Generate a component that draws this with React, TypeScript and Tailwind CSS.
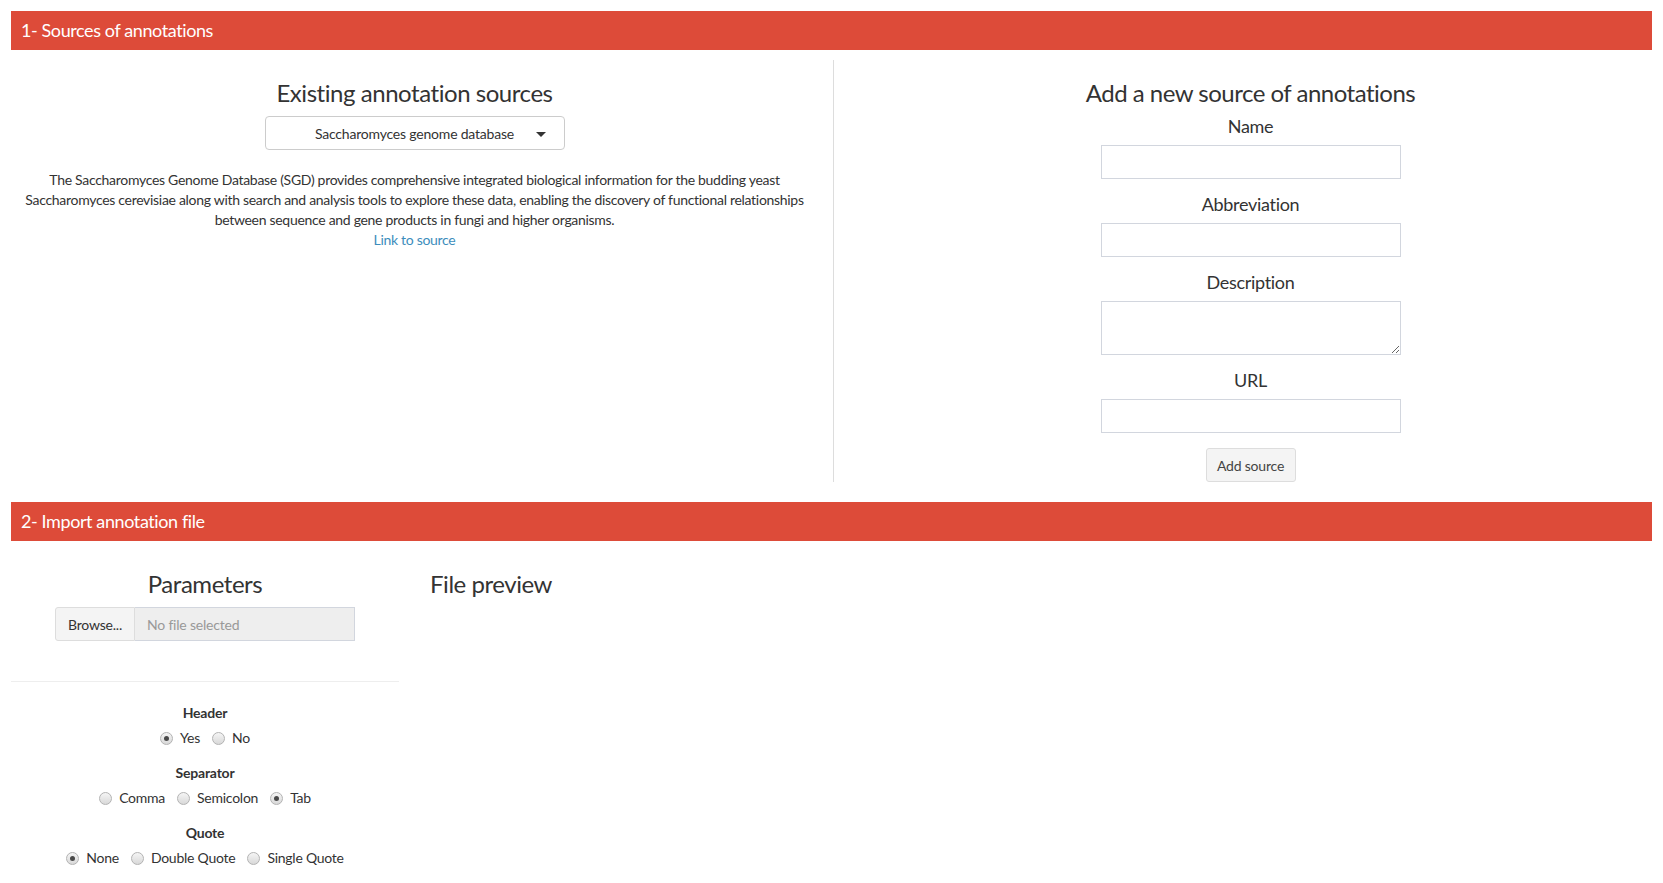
type RadioOption = {
  label: string;
  checked?: boolean;
};

type RadioGroupProps = {
  title: string;
  options: RadioOption[];
};

const sourceFields = ["Name", "Abbreviation"];

function SectionBar({ title }: { title: string }) {
  return (
    <div className="flex h-[39px] items-center bg-[#dd4b39] pl-[10px] text-[18px] tracking-[-0.4px] text-white">
      {title}
    </div>
  );
}

function Radio({ label, checked }: RadioOption) {
  return (
    <span className="inline-flex items-center gap-[7px]">
      <span className="flex h-[13px] w-[13px] items-center justify-center rounded-full border border-[#b3b3b3] bg-linear-to-b from-[#f5f5f5] to-[#d9d9d9]">
        {checked && <span className="h-[5px] w-[5px] rounded-full bg-[#4a4a4a]" />}
      </span>
      {label}
    </span>
  );
}

function RadioGroup({ title, options }: RadioGroupProps) {
  return (
    <div className="mb-[15px] flex flex-col items-center">
      <div className="text-[14px] leading-[20px] font-bold tracking-[-0.2px]">{title}</div>
      <div className="mt-[5px] flex items-center gap-[12px] text-[14px] leading-[20px] tracking-[-0.25px]">
        {options.map((option) => (
          <Radio key={option.label} label={option.label} checked={option.checked} />
        ))}
      </div>
    </div>
  );
}

function FieldLabel({ children }: { children: string }) {
  return <div className="mb-[9px] text-[18px] leading-[20px] tracking-[-0.3px]">{children}</div>;
}

export default function App() {
  return (
    <div className="min-h-screen bg-white px-[11px] pt-[11px] font-['Lato',sans-serif] text-[#333]">
      <SectionBar title="1- Sources of annotations" />

      <div className="mt-[10px] grid grid-cols-[822px_1fr]">
        {/* existing sources */}
        <div className="flex flex-col items-center pr-[15px]">
          <h3 className="mt-[20px] mb-[10px] text-[24px] leading-[26px] tracking-[-0.45px]">Existing annotation sources</h3>
          <div className="relative flex h-[34px] w-[300px] items-center justify-center rounded-[4px] border border-[#ccc] bg-white text-[14px] tracking-[-0.2px]">
            Saccharomyces genome database
            <span className="absolute top-[15px] right-[18px] h-0 w-0 border-x-[5px] border-t-[5px] border-x-transparent border-t-[#333]" />
          </div>
          <p className="mt-[20px] text-center text-[14px] leading-[20px] tracking-[-0.3px] whitespace-nowrap">
            The Saccharomyces Genome Database (SGD) provides comprehensive integrated biological information for the budding yeast
            <br />
            Saccharomyces cerevisiae along with search and analysis tools to explore these data, enabling the discovery of functional relationships
            <br />
            between sequence and gene products in fungi and higher organisms.
            <br />
            <a href="#" className="text-[#3c8dbc]">
              Link to source
            </a>
          </p>
        </div>

        {/* new source form */}
        <div className="flex flex-col items-center border-l border-[#ddd] pl-[15px]">
          <h3 className="mt-[20px] mb-[10px] text-[24px] leading-[26px] tracking-[-0.5px]">Add a new source of annotations</h3>
          {sourceFields.map((field) => (
            <div key={field} className="mb-[15px] flex flex-col items-center">
              <FieldLabel>{field}</FieldLabel>
              <input className="h-[34px] w-[300px] border border-[#d2d6de] px-[12px] text-[14px] outline-none" />
            </div>
          ))}
          <div className="mb-[15px] flex flex-col items-center">
            <FieldLabel>Description</FieldLabel>
            <textarea className="block h-[54px] w-[300px] border border-[#d2d6de] px-[12px] py-[6px] text-[14px] outline-none" />
          </div>
          <div className="flex flex-col items-center">
            <FieldLabel>URL</FieldLabel>
            <input className="h-[34px] w-[300px] border border-[#d2d6de] px-[12px] text-[14px] outline-none" />
          </div>
          <button className="mt-[15px] h-[34px] w-[90px] rounded-[3px] border border-[#ddd] bg-[#f4f4f4] text-[14px] tracking-[-0.2px] text-[#444]">
            Add source
          </button>
        </div>
      </div>

      <div className="mt-[20px]">
        <SectionBar title="2- Import annotation file" />
      </div>

      <div className="grid grid-cols-[388px_1fr]">
        {/* parameters */}
        <div className="flex flex-col items-center">
          <h3 className="mt-[30px] mb-[10px] text-[24px] leading-[26px] tracking-[-0.45px]">Parameters</h3>
          <div className="flex h-[34px] w-[300px] text-[14px] tracking-[-0.2px]">
            <span className="flex w-[80px] items-center justify-center rounded-l-[3px] border border-[#ddd] bg-[#f4f4f4]">
              Browse...
            </span>
            <span className="flex flex-1 items-center border border-l-0 border-[#d2d6de] bg-[#eee] pl-[12px] text-[#999]">
              No file selected
            </span>
          </div>
          <hr className="mt-[40px] mb-[21px] w-full border-t border-[#eee]" />
          <RadioGroup title="Header" options={[{ label: "Yes", checked: true }, { label: "No" }]} />
          <RadioGroup
            title="Separator"
            options={[{ label: "Comma" }, { label: "Semicolon" }, { label: "Tab", checked: true }]}
          />
          <RadioGroup
            title="Quote"
            options={[{ label: "None", checked: true }, { label: "Double Quote" }, { label: "Single Quote" }]}
          />
        </div>

        {/* preview */}
        <div className="pl-[31px]">
          <h3 className="mt-[30px] text-[24px] leading-[26px] tracking-[-0.45px]">File preview</h3>
        </div>
      </div>
    </div>
  );
}
